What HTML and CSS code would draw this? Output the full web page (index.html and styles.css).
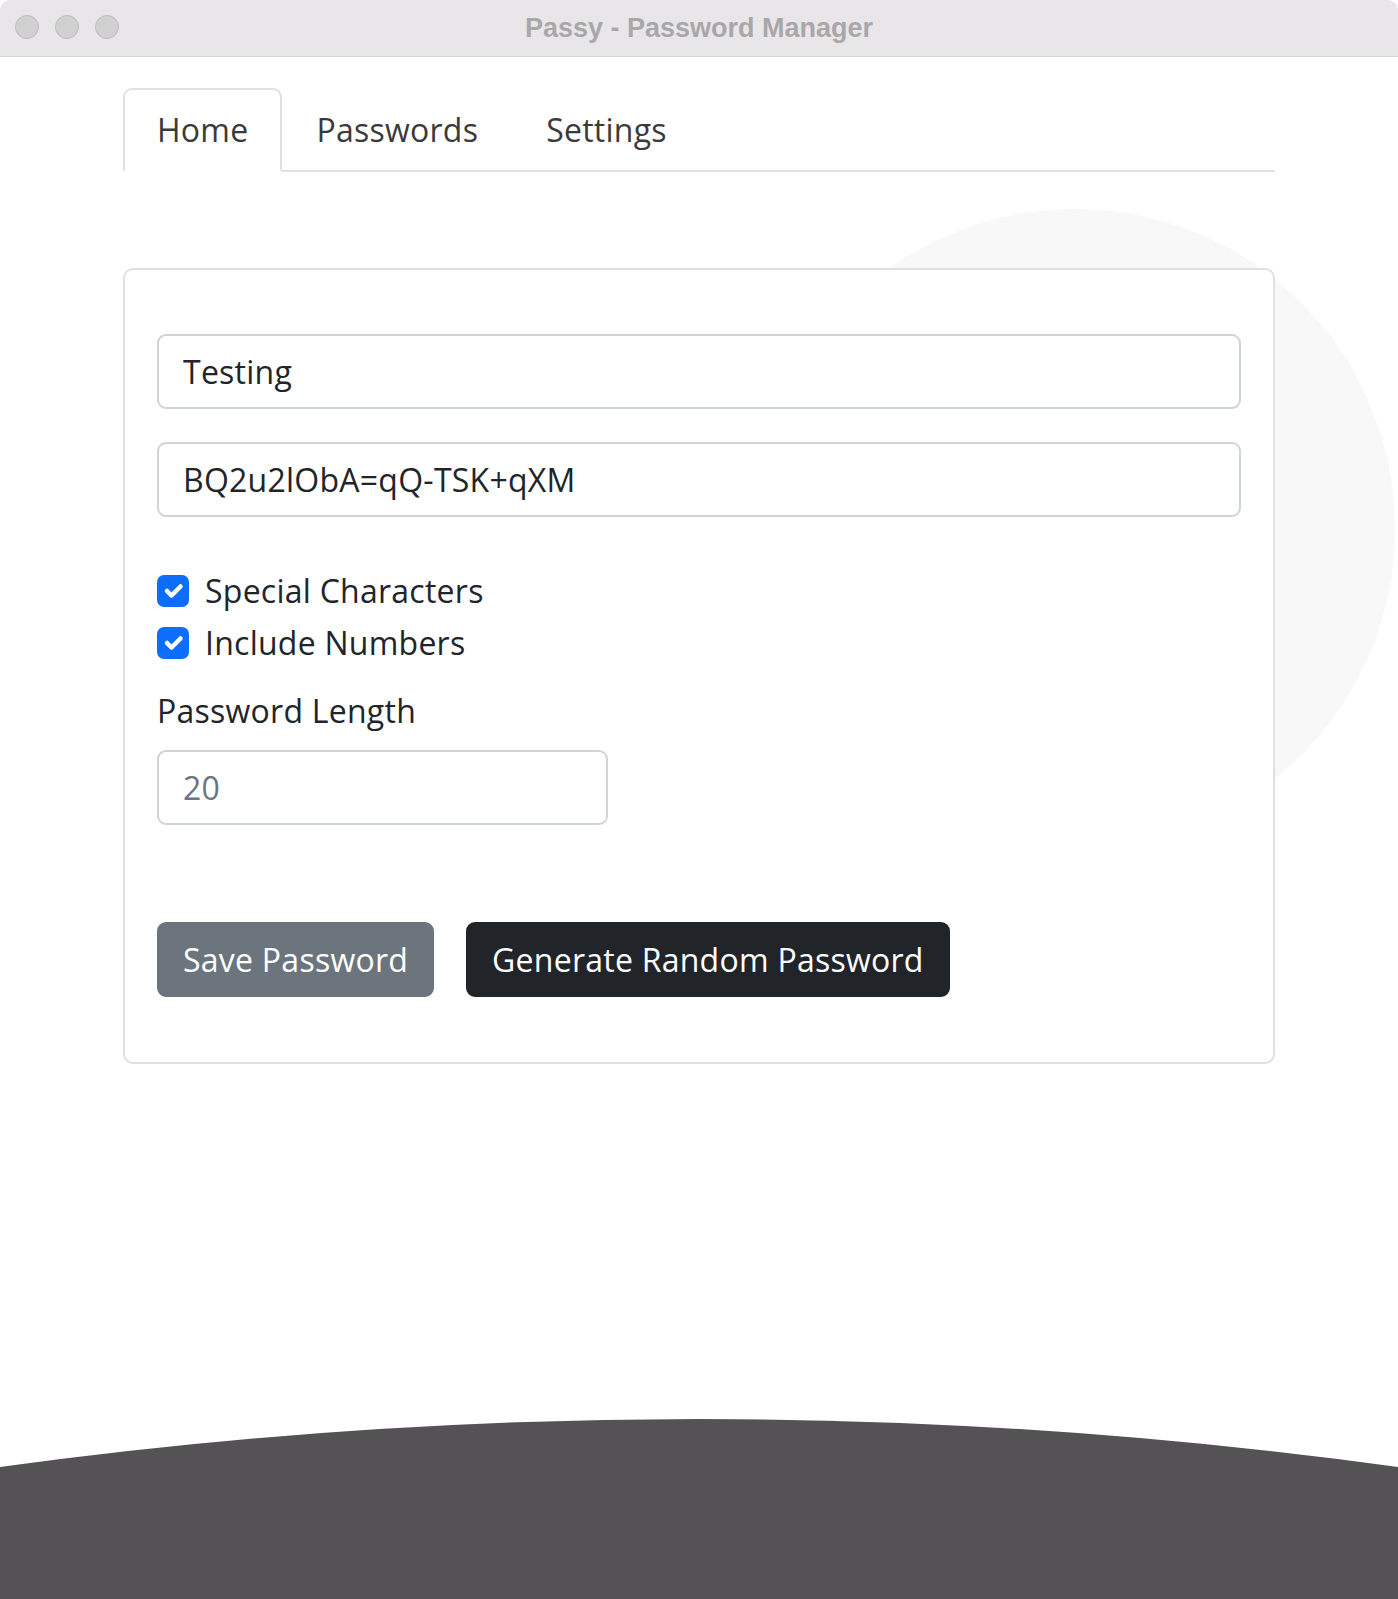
FILE: index.html
```html
<!DOCTYPE html>
<html lang="en">
<head>
<meta charset="utf-8">
<title>Passy - Password Manager</title>
<link rel="stylesheet" href="styles.css">
</head>
<body>
<div class="window">
  <header class="titlebar">
    <div class="lights">
      <span class="light"></span>
      <span class="light"></span>
      <span class="light"></span>
    </div>
    <div class="title">Passy - Password Manager</div>
  </header>

  <div class="bg-circle"></div>
  <svg class="bg-wave" viewBox="0 0 1398 181" preserveAspectRatio="none">
    <path d="M0,49 Q699,-47 1398,49 L1398,181 L0,181 Z" fill="#545254"/>
  </svg>

  <main class="container">
    <nav class="tabs">
      <a class="tab active">Home</a>
      <a class="tab">Passwords</a>
      <a class="tab">Settings</a>
    </nav>

    <section class="card">
      <form class="form">
        <div class="field">Testing</div>
        <div class="field gap">BQ2u2lObA=qQ-TSK+qXM</div>

        <div class="checks">
          <label class="check">
            <span class="box"><svg viewBox="0 0 20 20"><path d="M6 10l3 3l6-6" fill="none" stroke="#fff" stroke-width="3" stroke-linecap="round" stroke-linejoin="round"/></svg></span>
            <span>Special Characters</span>
          </label>
          <label class="check">
            <span class="box"><svg viewBox="0 0 20 20"><path d="M6 10l3 3l6-6" fill="none" stroke="#fff" stroke-width="3" stroke-linecap="round" stroke-linejoin="round"/></svg></span>
            <span>Include Numbers</span>
          </label>
        </div>

        <div class="label">Password Length</div>
        <div class="field short muted">20</div>

        <div class="actions">
          <button type="button" class="btn btn-secondary">Save Password</button>
          <button type="button" class="btn btn-dark">Generate Random Password</button>
        </div>
      </form>
    </section>
  </main>
</div>
</body>
</html>
```

FILE: styles.css
```css
* { box-sizing: border-box; }

html, body {
  margin: 0;
  padding: 0;
  background: #ffffff;
}

body {
  font-family: "Open Sans", "Noto Sans", sans-serif;
  color: #212529;
  letter-spacing: 0.25px;
}

.window {
  position: relative;
  width: 1398px;
  height: 1599px;
  overflow: hidden;
  background: #ffffff;
}

.titlebar {
  position: relative;
  z-index: 2;
  height: 57px;
  background: #e8e6e8;
  border-bottom: 1px solid #d6d5d6;
  border-radius: 10px 10px 0 0;
  display: flex;
  align-items: center;
  justify-content: center;
}

.lights {
  position: absolute;
  left: 15px;
  top: 15px;
  display: flex;
  gap: 16px;
}

.light {
  width: 24px;
  height: 24px;
  border-radius: 50%;
  background: #d2d1d2;
  border: 1px solid #bdbcbd;
}

.title {
  font-family: "Liberation Sans", Arial, sans-serif;
  font-weight: 700;
  font-size: 27px;
  letter-spacing: 0;
  color: #a9a8a9;
  line-height: 56px;
}

.bg-circle {
  position: absolute;
  left: 755px;
  top: 209px;
  width: 640px;
  height: 640px;
  border-radius: 50%;
  background: #f8f8f8;
  z-index: 0;
}

.bg-wave {
  position: absolute;
  left: 0;
  bottom: 0;
  width: 1398px;
  height: 181px;
  z-index: 0;
}

.container {
  position: relative;
  z-index: 1;
  width: 1152px;
  margin: 31px auto 0;
}

.tabs {
  display: flex;
  border-bottom: 2px solid #dee2e6;
}

.tab {
  display: block;
  padding: 16px 32px;
  font-size: 32px;
  line-height: 48px;
  color: #3a3a3a;
  border: 2px solid transparent;
  border-radius: 9px 9px 0 0;
  margin-bottom: -2px;
}

.tab.active {
  background: #ffffff;
  border-color: #dee2e6 #dee2e6 #ffffff;
}

.card {
  margin-top: 96px;
  background: #ffffff;
  border: 2px solid #e0e0e0;
  border-radius: 10px;
  padding: 32px;
}

.form {
  padding: 32px 0 33px;
}

.field {
  height: 75px;
  padding: 0 24px;
  border: 2px solid #ced4da;
  border-radius: 9px;
  font-size: 32px;
  line-height: 71px;
  color: #212529;
  background: #ffffff;
}

.field.gap {
  margin-top: 33px;
}

.field.short {
  width: 451px;
}

.field.muted {
  color: #6c757d;
}

.checks {
  margin-top: 50px;
  display: flex;
  flex-direction: column;
  gap: 4px;
}

.check {
  display: flex;
  align-items: center;
  gap: 16px;
  height: 48px;
  font-size: 32px;
  line-height: 48px;
  color: #212529;
}

.box {
  width: 32px;
  height: 32px;
  border-radius: 7px;
  background: #0d6efd;
  display: flex;
  align-items: center;
  justify-content: center;
}

.box svg {
  width: 30px;
  height: 30px;
}

.label {
  margin-top: 20px;
  margin-bottom: 15px;
  font-size: 32px;
  line-height: 48px;
  color: #212529;
}

.actions {
  margin-top: 97px;
  display: flex;
  gap: 32px;
}

.btn {
  font-family: inherit;
  font-size: 32px;
  letter-spacing: 0.25px;
  line-height: 71px;
  height: 75px;
  padding: 0 24px;
  border: 2px solid transparent;
  border-radius: 9px;
  color: #ffffff;
  cursor: pointer;
}

.btn-secondary {
  background: #6c757d;
  border-color: #6c757d;
}

.btn-dark {
  background: #212529;
  border-color: #212529;
}
```
